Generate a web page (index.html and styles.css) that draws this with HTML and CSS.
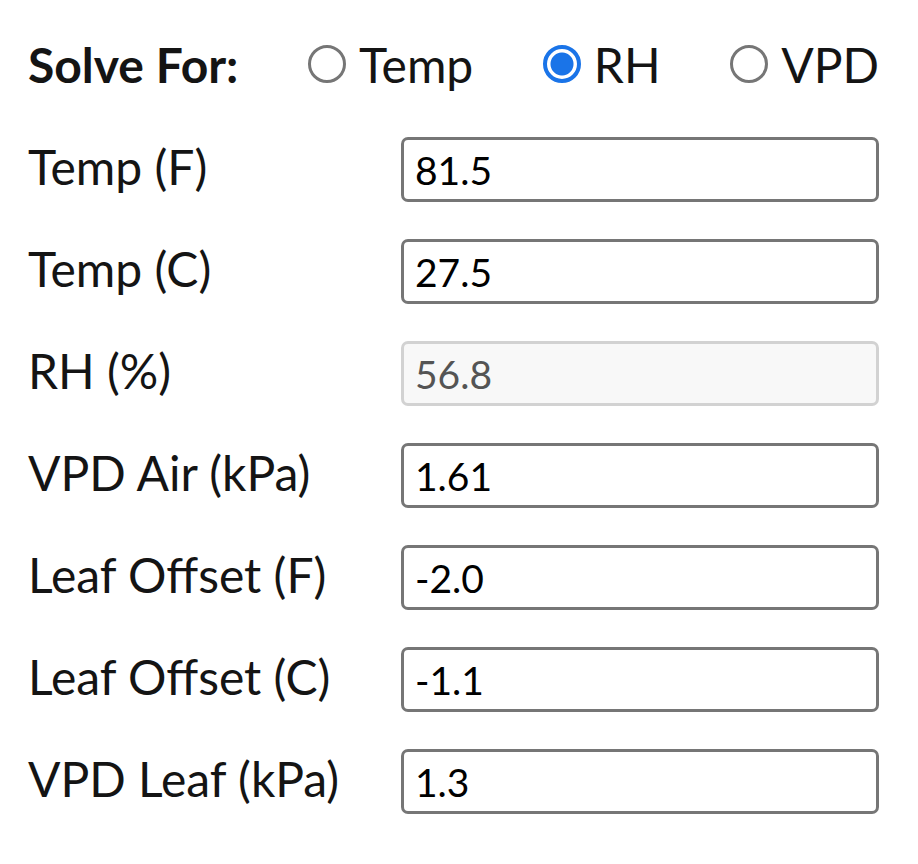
FILE: index.html
```html
<html>
<head>
  <title>VPD Calculator</title>
  <link rel="stylesheet" href="styles.css">
</head>
<body>
  <div class="calc">
    <div class="solve_row">
      <span class="solve_label">Solve For:</span>
      <label class="choice"><input type="radio" name="solve"><span>Temp</span></label>
      <label class="choice"><input type="radio" name="solve" checked><span>RH</span></label>
      <label class="choice"><input type="radio" name="solve"><span>VPD</span></label>
    </div>

    <div class="field"><label>Temp (F)</label><input type="text" value="81.5"></div>
    <div class="field"><label>Temp (C)</label><input type="text" value="27.5"></div>
    <div class="field"><label>RH (%)</label><input type="text" value="56.8" disabled></div>
    <div class="field"><label>VPD Air (kPa)</label><input type="text" value="1.61"></div>
    <div class="field"><label>Leaf Offset (F)</label><input type="text" value="-2.0"></div>
    <div class="field"><label>Leaf Offset (C)</label><input type="text" value="-1.1"></div>
    <div class="field"><label>VPD Leaf (kPa)</label><input type="text" value="1.3"></div>
  </div>
</body>
</html>
```

FILE: styles.css
```css
body {
    margin: 0;
    background: #ffffff;
    font-family: Lato, "Noto Sans", sans-serif;
    color: #141414;
}

.calc {
    width: 851px;
    padding: 36px 0 0 28px;
}

.solve_row {
    display: flex;
    justify-content: space-between;
    align-items: center;
    height: 56px;
    font-size: 48px;
    margin-bottom: 45px;
}

.solve_label {
    font-weight: bold;
}

.choice {
    display: flex;
    align-items: center;
}

/* radios drawn by hand so the ring is as thick as in the scaled page */
.choice input {
    appearance: none;
    -webkit-appearance: none;
    box-sizing: border-box;
    width: 38px;
    height: 38px;
    margin: 0 13px 0 0;
    border: 3px solid #767676;
    border-radius: 50%;
    background: #ffffff;
}

.choice input:checked {
    border: 4px solid #1a74e8;
    background: radial-gradient(circle, #1a74e8 0, #1a74e8 11px, #ffffff 12px);
}

.field {
    display: flex;
    align-items: center;
    height: 65px;
    margin-bottom: 37px;
}

.field label {
    width: 373px;
    font-size: 48px;
    padding-bottom: 7px;
}

.field input {
    width: 478px;
    height: 65px;
    box-sizing: border-box;
    border: 3px solid #767676;
    border-radius: 7px;
    padding: 0 11px;
    font-family: Lato, "Noto Sans", sans-serif;
    font-size: 39px;
    color: #000000;
    background: #ffffff;
}

.field input:disabled {
    background: #f8f8f8;
    border-color: #d2d2d2;
    color: #545454;
}
```
